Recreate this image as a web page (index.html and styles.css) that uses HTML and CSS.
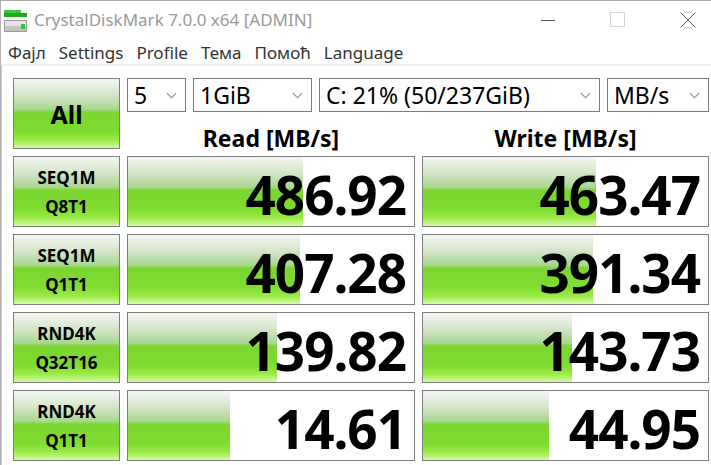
FILE: index.html
```html
<!doctype html>
<html lang="sr">
  <head>
    <meta charset="UTF-8" />
    <meta name="viewport" content="width=device-width, initial-scale=1.0" />
    <title>CrystalDiskMark 7.0.0 x64 [ADMIN]</title>
    <link rel="stylesheet" href="styles.css">
  </head>
  <body>
    <div class="window">
      <header class="titlebar">
        <svg class="app-icon" width="24" height="24" viewBox="0 0 24 24">
          <rect x="0" y="2" width="17" height="3" fill="#3cc83c" />
          <rect x="0" y="5" width="23" height="4" fill="#22a822" />
          <rect x="0" y="12" width="23" height="12" rx="1" fill="#9a9a9a" />
          <rect x="1" y="13" width="21" height="5" fill="#e4e4e4" />
          <rect x="1" y="18" width="21" height="5" fill="#c4c4c4" />
          <rect x="17" y="16" width="4" height="5" fill="#32c832" />
        </svg>
        <span class="title">CrystalDiskMark 7.0.0 x64 [ADMIN]</span>
        <div class="controls">
          <svg width="16" height="16" viewBox="0 0 16 16"><path d="M1 8.5h14" stroke="#555" /></svg>
          <svg width="16" height="16" viewBox="0 0 16 16"><rect x="0.5" y="0.5" width="14" height="14" fill="none" stroke="#d6d6d6" /></svg>
          <svg width="16" height="16" viewBox="0 0 16 16"><path d="M0.5 0.5l15 15M15.5 0.5l-15 15" stroke="#555" /></svg>
        </div>
      </header>

      <nav class="menu">
        <span>Фајл</span>
        <span>Settings</span>
        <span>Profile</span>
        <span>Тема</span>
        <span>Помоћ</span>
        <span>Language</span>
      </nav>

      <main class="board">
        <button class="btn all">All</button>
        <div class="top">
          <div class="selects">
            <div class="select s-count">5<i></i></div>
            <div class="select s-size">1GiB<i></i></div>
            <div class="select s-drive">C: 21% (50/237GiB)<i></i></div>
            <div class="select s-unit">MB/s<i></i></div>
          </div>
          <div class="heads">
            <div class="head">Read [MB/s]</div>
            <div class="head">Write [MB/s]</div>
          </div>
        </div>

        <button class="btn test">SEQ1M<br>Q8T1</button>
        <div class="cell"><div class="bar" style="width: 61.2%"></div><span>486.92</span></div>
        <div class="cell"><div class="bar" style="width: 60.8%"></div><span>463.47</span></div>

        <button class="btn test">SEQ1M<br>Q1T1</button>
        <div class="cell"><div class="bar" style="width: 60.1%"></div><span>407.28</span></div>
        <div class="cell"><div class="bar" style="width: 59.8%"></div><span>391.34</span></div>

        <button class="btn test">RND4K<br>Q32T16</button>
        <div class="cell"><div class="bar" style="width: 52.1%"></div><span>139.82</span></div>
        <div class="cell"><div class="bar" style="width: 52.4%"></div><span>143.73</span></div>

        <button class="btn test">RND4K<br>Q1T1</button>
        <div class="cell"><div class="bar" style="width: 35.7%"></div><span>14.61</span></div>
        <div class="cell"><div class="bar" style="width: 44.1%"></div><span>44.95</span></div>
      </main>
    </div>
  </body>
</html>
```

FILE: styles.css
```css
* {
  box-sizing: border-box;
}

body {
  margin: 0;
  font-family: "Noto Sans", "Open Sans", sans-serif;
  background: #fff;
  overflow: hidden;
}

.window {
  width: 711px;
  height: 465px;
  border-top: 1px solid #a9a9a9;
  border-left: 1px solid #b4b4b4;
  display: flex;
  flex-direction: column;
}

.titlebar {
  height: 37px;
  display: flex;
  align-items: center;
  padding-left: 3px;
  gap: 6px;
}

.app-icon {
  flex: none;
}

.title {
  font-size: 17px;
  color: #9a9a9a;
}

.controls {
  margin-left: auto;
  display: flex;
  gap: 54px;
  padding-right: 15px;
  align-items: center;
}

.menu {
  height: 28px;
  display: flex;
  align-items: center;
  gap: 13px;
  padding: 2px 0 0 7px;
  font-size: 17px;
  color: #333;
  border-bottom: 2px solid #f0f0f0;
}

.board {
  flex: 1;
  border-left: 1px solid #c8c8c8;
  padding: 12px 0 0 11px;
  display: grid;
  grid-template-columns: 107px 288px 287px;
  grid-template-rows: 71px 71px 71px 71px 71px;
  gap: 7px;
  align-content: start;
}

.btn {
  margin: 0;
  padding: 0;
  font-family: inherit;
  font-weight: bold;
  color: #000;
  border: 1px solid #7f7f7f;
  background: linear-gradient(#f4f6f2 0%, #d6e6cc 22%, #a8d690 44%, #7bd630 48%, #7fdc30 76%, #98ea44 88%, #d4fba6 100%);
}

.all {
  font-size: 25px;
}

.test {
  font-size: 17px;
  line-height: 29px;
  padding-top: 1px;
}

.top {
  grid-column: 2 / 4;
  display: flex;
  flex-direction: column;
}

.selects {
  height: 35px;
  display: flex;
  gap: 7px;
}

.select {
  position: relative;
  border: 1px solid #7a7a7a;
  font-size: 23px;
  line-height: 32px;
  padding-left: 6px;
  color: #000;
}

.select i {
  position: absolute;
  right: 10px;
  top: 11px;
  width: 7px;
  height: 7px;
  border-right: 1px solid #888;
  border-bottom: 1px solid #888;
  transform: rotate(45deg);
}

.s-count { width: 59px; }
.s-size { width: 119px; }
.s-drive { width: 281px; }
.s-unit { width: 102px; }

.heads {
  flex: 1;
  display: grid;
  grid-template-columns: 288px 287px;
  gap: 7px;
}

.head {
  text-align: center;
  font-weight: bold;
  font-size: 23px;
  line-height: 26px;
  padding-top: 13px;
}

.cell {
  position: relative;
  border: 1px solid #7f7f7f;
  display: flex;
  align-items: center;
  justify-content: flex-end;
  padding: 6px 8px 0 0;
  background: #fff;
}

.bar {
  position: absolute;
  left: 0;
  top: 0;
  bottom: 0;
  background: linear-gradient(#f4f6f2 0%, #d6e6cc 22%, #a8d690 44%, #7bd630 48%, #7fdc30 76%, #98ea44 88%, #d4fba6 100%);
}

.cell span {
  position: relative;
  font-size: 53px;
  font-weight: bold;
  letter-spacing: -1px;
  line-height: 1;
  color: #000;
}
```
